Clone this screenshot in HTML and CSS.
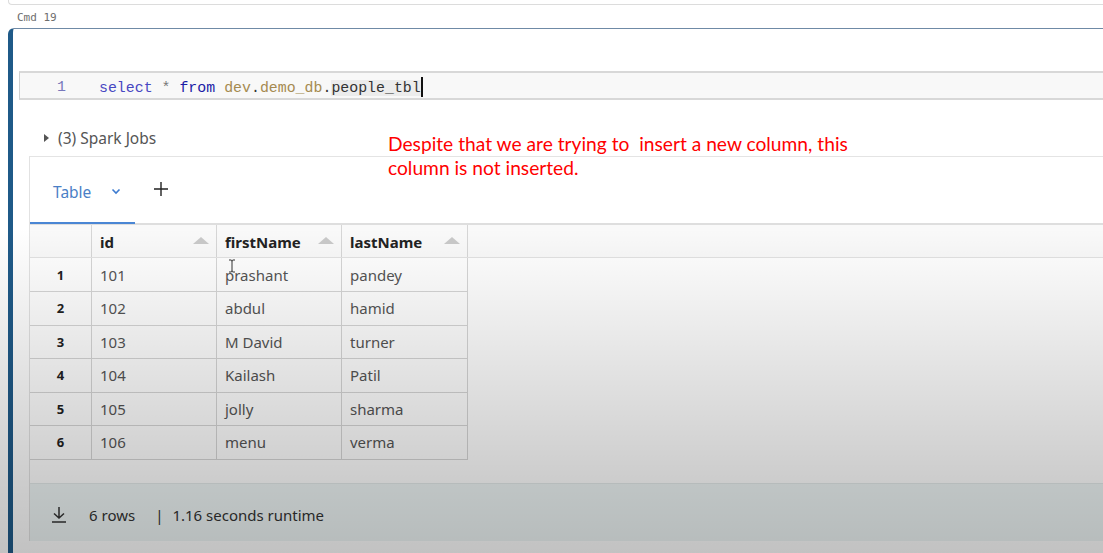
FILE: index.html
```html
<!DOCTYPE html>
<html>
<head>
<meta charset="utf-8">
<link rel="stylesheet" href="styles.css">
</head>
<body>
<div class="page">
  <div class="prev-cell"></div>
  <div class="cmd">Cmd 19</div>
  <div class="cell">
    <div class="editor">
      <span class="ln">1</span>
      <span class="code"><span class="kw">select</span> <span class="op">*</span> <span class="kw2">from</span> <span class="id">dev</span>.<span class="id">demo_db</span>.<span class="hl">people_tbl</span><span class="caret"></span></span>
    </div>
    <div class="jobs"><span class="tri"></span>(3) Spark Jobs</div>
    <div class="panel">
      <div class="tabs">
        <div class="tab active">
          <span>Table</span>
          <svg class="chev" width="10" height="7" viewBox="0 0 10 7"><path d="M1.5 1.5 L5 5 L8.5 1.5" fill="none" stroke="#3d7bd0" stroke-width="1.6"/></svg>
        </div>
        <svg class="plus" width="16" height="16" viewBox="0 0 16 16"><path d="M8 1 V15 M1 8 H15" stroke="#222" stroke-width="1.4"/></svg>
      </div>
      <div class="head-band">
        <div class="grid head">
          <div class="c rn"></div>
          <div class="c">id<span class="sort"></span></div>
          <div class="c">firstName<span class="sort"></span></div>
          <div class="c">lastName<span class="sort"></span></div>
        </div>
      </div>
      <div class="body">
        <div class="grid row"><div class="c rn">1</div><div class="c">101</div><div class="c">prashant</div><div class="c">pandey</div></div>
        <div class="grid row"><div class="c rn">2</div><div class="c">102</div><div class="c">abdul</div><div class="c">hamid</div></div>
        <div class="grid row"><div class="c rn">3</div><div class="c">103</div><div class="c">M David</div><div class="c">turner</div></div>
        <div class="grid row"><div class="c rn">4</div><div class="c">104</div><div class="c">Kailash</div><div class="c">Patil</div></div>
        <div class="grid row"><div class="c rn">5</div><div class="c">105</div><div class="c">jolly</div><div class="c">sharma</div></div>
        <div class="grid row"><div class="c rn">6</div><div class="c">106</div><div class="c">menu</div><div class="c">verma</div></div>
      </div>
      <div class="footer">
        <svg class="dl" width="16" height="17" viewBox="0 0 16 17"><path d="M8 1 V12 M3 7.5 L8 12 L13 7.5 M1 16 H15" fill="none" stroke="#333" stroke-width="1.5"/></svg>
        <span class="rows">6 rows</span>
        <span class="sep">|</span>
        <span>1.16 seconds runtime</span>
      </div>
    </div>
  </div>
  <div class="note">Despite that we are trying to  insert a new column, this
column is not inserted.</div>
  <svg class="ibeam" width="8" height="14" viewBox="0 0 8 14"><path d="M1 1 H3 Q4 1 4 2.5 V11.5 Q4 13 3 13 H1 M7 1 H5 Q4 1 4 2.5 M4 11.5 Q4 13 5 13 H7" fill="none" stroke="#333" stroke-width="1"/></svg>
  <div class="shade"></div>
</div>
</body>
</html>
```
FILE: styles.css
```css
* { box-sizing: border-box; }
html, body { margin: 0; padding: 0; background: #fff; }
.page {
  position: relative;
  width: 1103px;
  height: 553px;
  overflow: hidden;
  font-family: "Noto Sans", "Open Sans", sans-serif;
}
.prev-cell {
  margin-left: 8px;
  height: 5px;
  border-left: 1px solid #dcdcdc;
  border-bottom: 1px solid #dcdcdc;
  border-bottom-left-radius: 4px;
}
.cmd {
  padding-left: 17px;
  height: 23px;
  padding-top: 6px;
  font-family: "DejaVu Sans Mono", monospace;
  font-size: 11px;
  color: #6e6e6e;
}
.cell {
  margin-left: 8px;
  height: 525px;
  border-left: 5px solid #1f5a88;
  border-top: 1px solid #6f8aa6;
  border-top-left-radius: 6px;
  padding-top: 42px;
  padding-left: 6px;
  padding-bottom: 12px;
  display: flex;
  flex-direction: column;
}
.editor {
  height: 29px;
  background: #f8f8f8;
  border-top: 2px solid #d8d8d8;
  border-bottom: 2px solid #d8d8d8;
  border-left: 1px solid #d0d0d0;
  display: flex;
  align-items: center;
  padding-top: 2px;
  font-family: "Liberation Mono", monospace;
  font-size: 14.9px;
  white-space: pre;
  color: #333;
}
.ln { width: 79px; padding-left: 37px; color: #7777bb; }
.code { white-space: pre; }
.kw { color: #4747c2; }
.kw2 { color: #1c1ca6; }
.op { color: #777; }
.id { color: #a58a50; }
.hl { background: #ececec; }
.caret { display: inline-block; width: 2px; height: 20px; background: #111; vertical-align: -5px; }
.jobs {
  margin-top: 20px;
  margin-left: 25px;
  height: 36px;
  padding-top: 2px;
  padding-bottom: 3px;
  display: flex;
  align-items: center;
  gap: 9px;
  font-size: 15.5px;
  color: #555;
}
.tri {
  width: 0; height: 0;
  border-left: 5px solid #555;
  border-top: 4.5px solid transparent;
  border-bottom: 4.5px solid transparent;
}
.panel {
  margin-left: 10px;
  flex: 1;
  border-top: 1px solid #e4e4e4;
  border-left: 1px solid #e2e2e2;
  display: flex;
  flex-direction: column;
}
.tabs {
  height: 68px;
  border-bottom: 2px solid #dedede;
  display: flex;
  align-items: stretch;
}
.tab {
  width: 105px;
  display: flex;
  align-items: center;
  gap: 20px;
  padding-left: 23px;
  padding-top: 2px;
  color: #4a7fc6;
  font-size: 15.5px;
}
.tab.active { box-shadow: inset 0 -2px 0 #4a86d4; margin-bottom: -1px; }
.plus { align-self: center; margin-left: 18px; margin-top: -3px; }
.head-band {
  background: #f9f9f9;
  border-bottom: 1px solid #e2e2e2;
}
.grid {
  display: grid;
  grid-template-columns: 62px 125px 125px 126px;
  width: 438px;
}
.c {
  border-right: 1px solid #d6d6d6;
  padding-left: 8px;
  display: flex;
  align-items: center;
  position: relative;
  font-size: 15px;
  color: #555;
}
.c.rn { justify-content: center; padding-left: 0; font-weight: bold; font-size: 13px; color: #222; }
.head .c { height: 32px; padding-top: 1px; font-weight: bold; color: #222; font-size: 15px; }
.sort {
  position: absolute;
  right: 7px;
  top: 12px;
  width: 0; height: 0;
  border-bottom: 7px solid #c9c9c9;
  border-left: 8px solid transparent;
  border-right: 8px solid transparent;
}
.body { flex: 1; }
.row { border-bottom: 1px solid #d6d6d6; }
.row .c { height: 32.5px; }
.row:first-child .c { height: 33px; }
.footer {
  height: 58px;
  background: #eff6f6;
  border-top: 1px solid #e4eaea;
  display: flex;
  align-items: center;
  padding-left: 21px;
  padding-top: 4px;
  font-size: 15px;
  color: #333;
}
.footer .dl { margin-right: 22px; }
.footer .rows { margin-right: 20px; }
.footer .sep { margin-right: 9px; }
.note {
  position: absolute;
  left: 388px;
  top: 132px;
  white-space: pre;
  font-family: "Lato", sans-serif;
  font-size: 19.2px;
  line-height: 24px;
  color: #ff0000;
}
.ibeam { position: absolute; left: 228px; top: 259px; }
.shade {
  position: absolute;
  inset: 0;
  pointer-events: none;
  background: linear-gradient(to bottom, rgba(0,0,0,0) 0px, rgba(0,0,0,0) 228px, rgba(0,0,0,0.2) 482px, rgba(0,0,0,0.24) 553px);
}
```
